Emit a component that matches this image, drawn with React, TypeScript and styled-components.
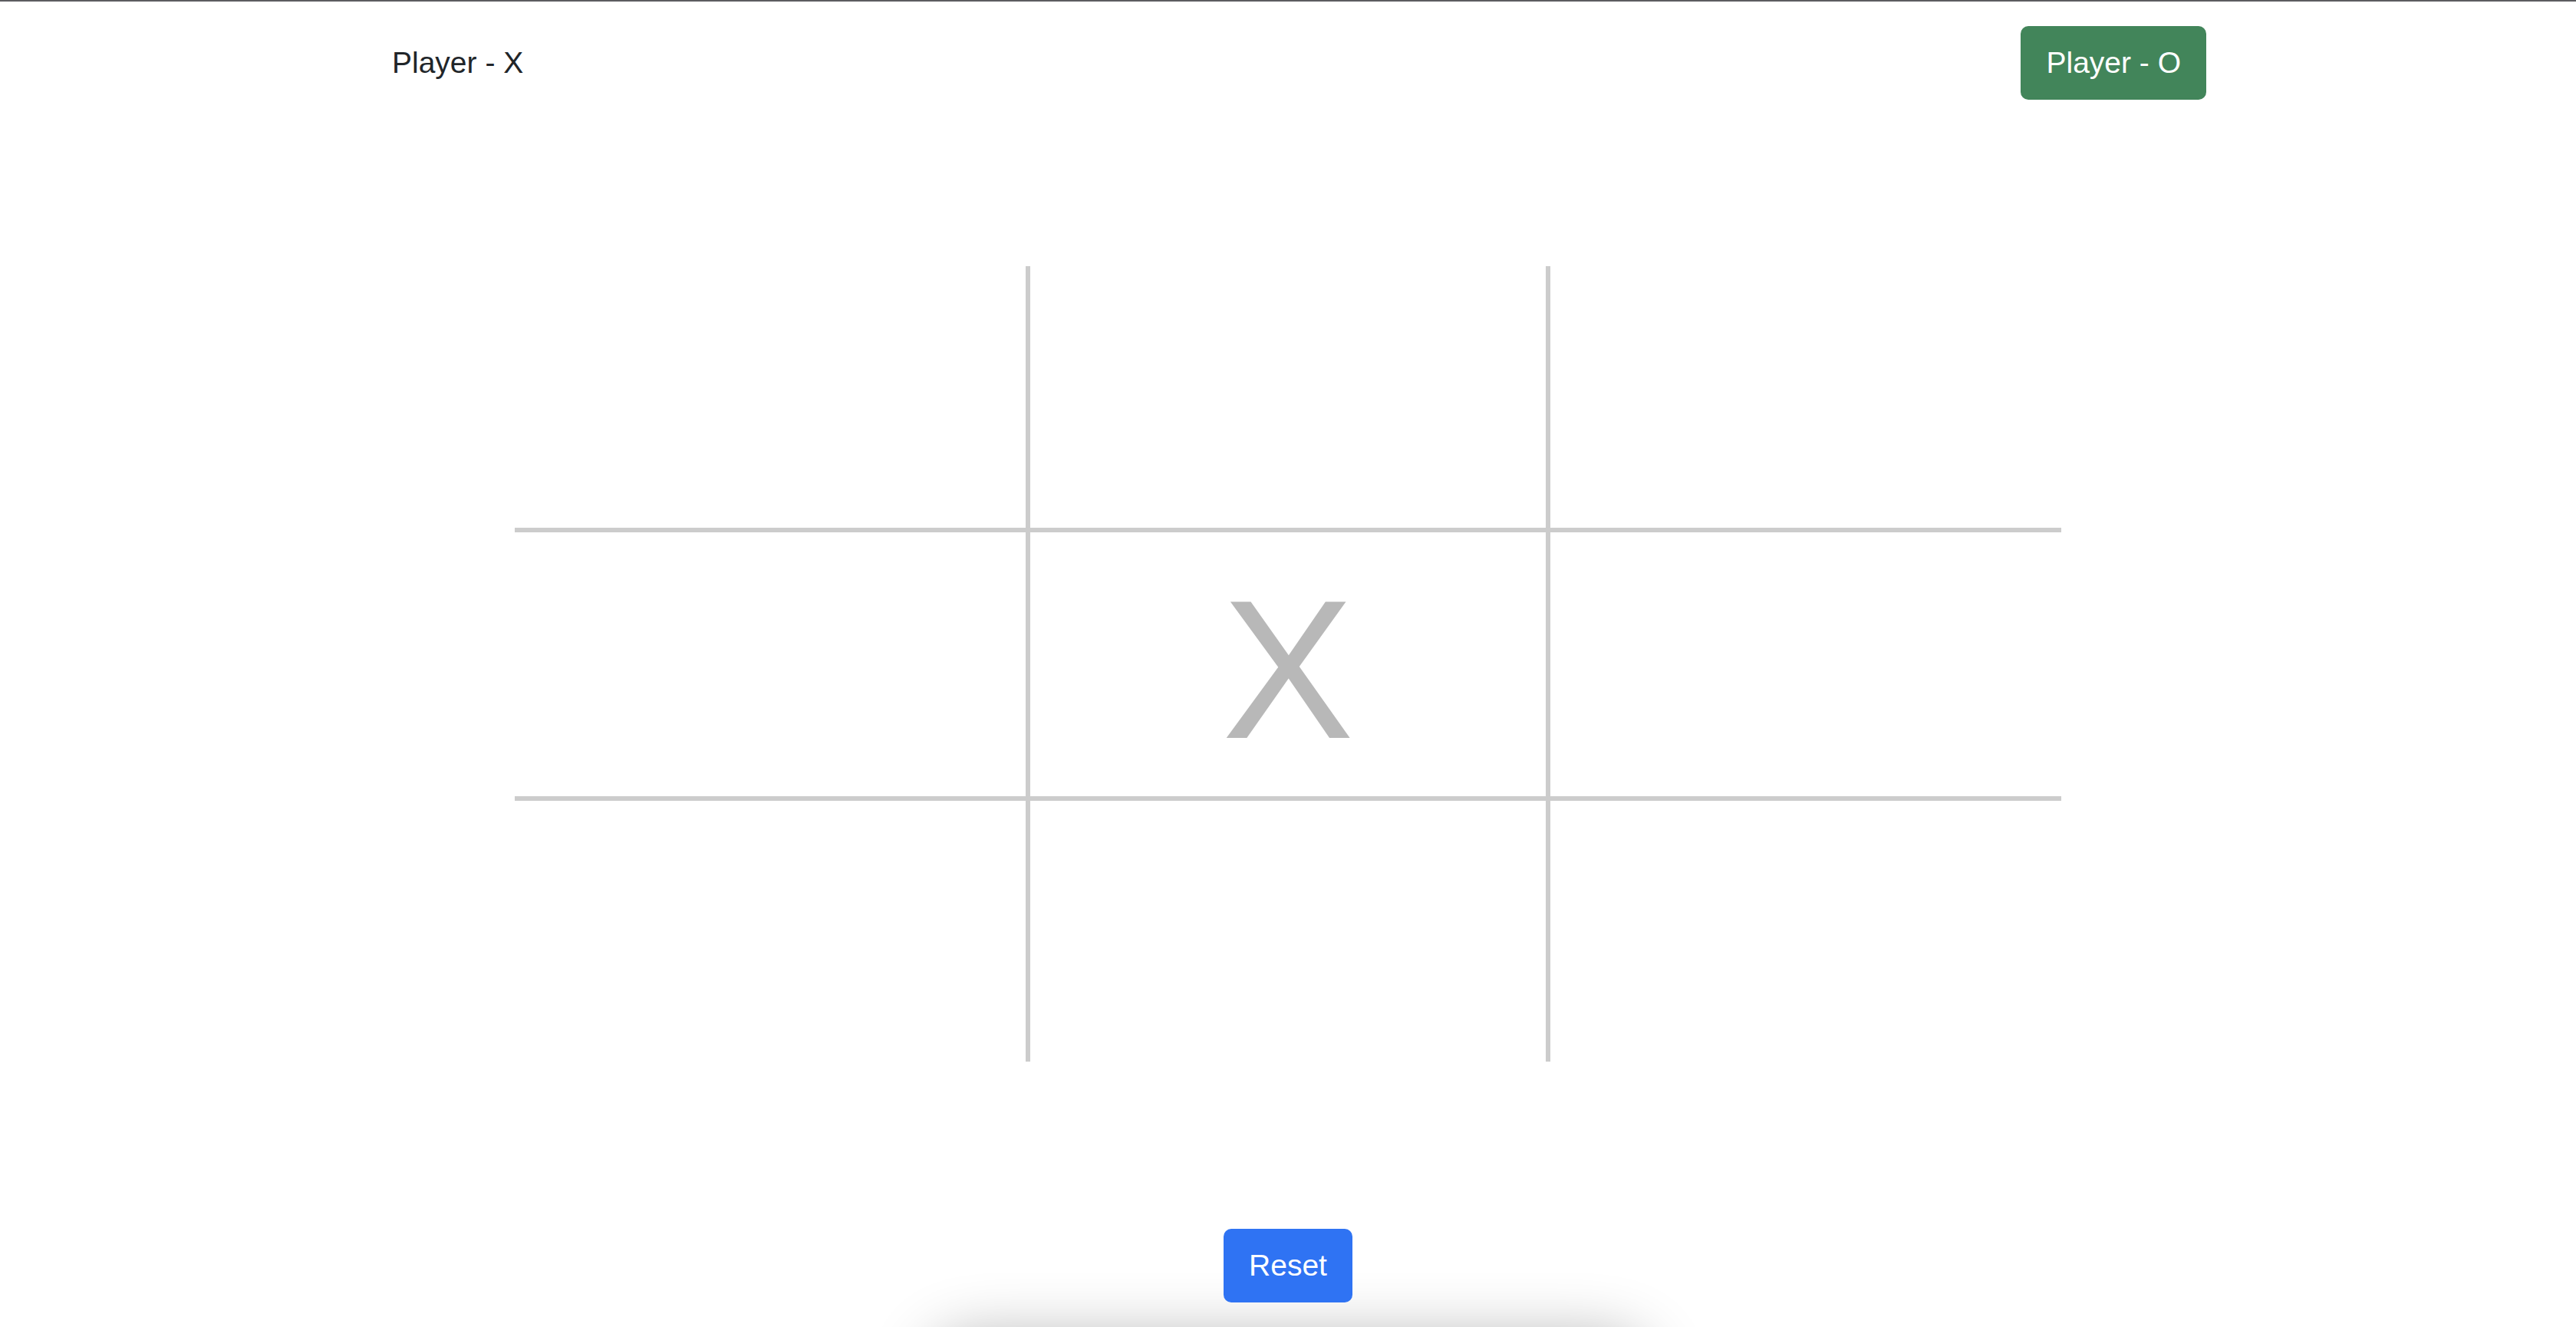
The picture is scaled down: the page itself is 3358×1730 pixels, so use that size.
import React from "react";
import styled, { createGlobalStyle } from "styled-components";

const GlobalStyle = createGlobalStyle`
  html, body {
    margin: 0;
    padding: 0;
    background: #ffffff;
    overflow: hidden;
  }
  body {
    font-family: "Liberation Sans", Helvetica, Arial, sans-serif;
    color: #212529;
  }
  * { box-sizing: border-box; }
`;

const Page = styled.div`
  position: relative;
  min-height: 100vh;
  height: 1730px;
  display: flex;
  flex-direction: column;
  border-top: 2px solid #5c5c60;
  background: #ffffff;
  overflow: hidden;
`;

const Header = styled.header`
  display: flex;
  justify-content: space-between;
  align-items: center;
  padding: 32px 482px 0 478px;
`;

const Button = styled.button<{ $variant: "plain" | "success" | "primary" }>`
  position: relative;
  z-index: 1;
  font-family: "Liberation Sans", Helvetica, Arial, sans-serif;
  font-size: 39px;
  line-height: 60px;
  font-weight: 400;
  padding: 16px 31px;
  border: 2px solid transparent;
  border-radius: 10px;
  cursor: pointer;
  color: ${(p) => (p.$variant === "plain" ? "#212529" : "#ffffff")};
  background: ${(p) =>
    p.$variant === "success"
      ? "#42855a"
      : p.$variant === "primary"
      ? "#2f73f3"
      : "transparent"};
`;

const Board = styled.div`
  margin: 217px auto 0;
  display: grid;
  grid-template-columns: 666px 684px 666px;
  grid-template-rows: 341px 356px 340px;
`;

const Cell = styled.div<{ $midCol: boolean; $midRow: boolean }>`
  display: flex;
  align-items: center;
  justify-content: center;
  padding-top: 14px;
  border-left: ${(p) => (p.$midCol ? "6px solid #cccccc" : "none")};
  border-right: ${(p) => (p.$midCol ? "6px solid #cccccc" : "none")};
  border-top: ${(p) => (p.$midRow ? "6px solid #cccccc" : "none")};
  border-bottom: ${(p) => (p.$midRow ? "6px solid #cccccc" : "none")};
  font-family: "Liberation Sans", Helvetica, Arial, sans-serif;
  font-size: 258px;
  line-height: 1;
  color: #b8b8b8;
`;

const Footer = styled.footer`
  position: relative;
  z-index: 1;
  display: flex;
  justify-content: center;
  margin-top: 218px;
`;

const BottomShadow = styled.div`
  position: absolute;
  left: 1230px;
  width: 900px;
  top: 1760px;
  height: 100px;
  border-radius: 40px;
  box-shadow: 0 0 80px 20px rgba(0, 0, 0, 0.3);
  pointer-events: none;
  z-index: 0;
`;

const cells = ["", "", "", "", "X", "", "", "", ""];

export default function App() {
  return (
    <>
      <GlobalStyle />
      <Page>
        <Header>
          <Button $variant="plain">Player - X</Button>
          <Button $variant="success">Player - O</Button>
        </Header>
        <Board>
          {cells.map((v, i) => (
            <Cell key={i} $midCol={i % 3 === 1} $midRow={Math.floor(i / 3) === 1}>
              {v}
            </Cell>
          ))}
        </Board>
        <Footer>
          <Button $variant="primary">Reset</Button>
        </Footer>
        <BottomShadow />
      </Page>
    </>
  );
}
